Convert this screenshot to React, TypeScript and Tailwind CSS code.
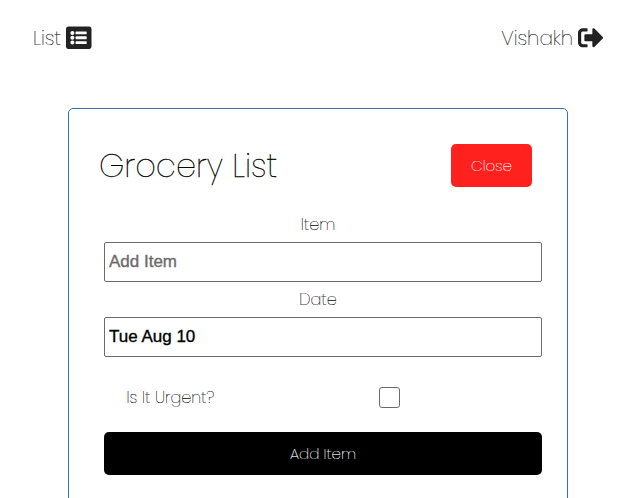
import { FaListAlt, FaSignOutAlt } from "react-icons/fa";

function Header() {
  return (
    <header className="flex h-[76px] items-center justify-between pl-[33px] pr-8 text-[20px] text-[#222] [-webkit-text-stroke:0.22px]">
      <a className="flex items-center gap-[5px]">
        <span>List</span>
        <FaListAlt className="mb-px size-[25.5px]" />
      </a>
      <a className="flex items-center gap-[4.5px]">
        <span>Vishakh</span>
        <FaSignOutAlt className="mb-px size-[25.5px]" />
      </a>
    </header>
  );
}

export default function App() {
  return (
    <div className="h-[498px] overflow-hidden bg-white font-['Poppins','Inter',sans-serif] font-extralight text-black antialiased [-webkit-text-stroke:0.16px]">
      <Header />
      <main className="ml-[68px] mt-8 h-[420px] w-[500px] rounded-[5px] border border-[#3776ab] pt-[35px]">
        <div className="flex items-center justify-between pl-[30px] pr-[35px]">
          <h1 className="whitespace-nowrap pt-px text-[32px] font-extralight leading-[42px] [-webkit-text-stroke:0.35px]">Grocery List</h1>
          <button className="h-[43px] w-[81px] rounded-[5px] bg-[#ff211e] pt-px text-[15px] font-extralight text-white">Close</button>
        </div>
        <form className="ml-[35px] mt-[25px] flex w-[438px] flex-col text-[16px]">
          <label className="flex h-[30px] items-center justify-center pr-[10px] pb-1">Item</label>
          <input
            className="h-10 rounded-[2px] border border-[#6b6b6b] px-1 font-['Liberation_Sans',Arial,sans-serif] text-[17px] font-normal [-webkit-text-stroke:0.35px] placeholder:text-[#6b6b6b]"
            placeholder="Add Item"
          />
          <label className="flex h-[35px] items-center justify-center pr-[10px] pt-px">Date</label>
          <input
            className="h-10 rounded-[2px] border border-[#6b6b6b] px-1 font-['Liberation_Sans',Arial,sans-serif] text-[17px] font-normal [-webkit-text-stroke:0.35px]"
            defaultValue="Tue Aug 10"
          />
          <div className="flex h-[75px] items-center pt-[5px]">
            <label className="ml-[22.5px] w-[252.5px] pt-px">Is It Urgent?</label>
            <input type="checkbox" className="size-[21px] appearance-none rounded-[3px] border border-[#6b6b6b]" />
          </div>
          <button className="h-[43px] rounded-[5px] bg-black pt-px text-[15px] font-extralight text-white">Add Item</button>
        </form>
      </main>
    </div>
  );
}
